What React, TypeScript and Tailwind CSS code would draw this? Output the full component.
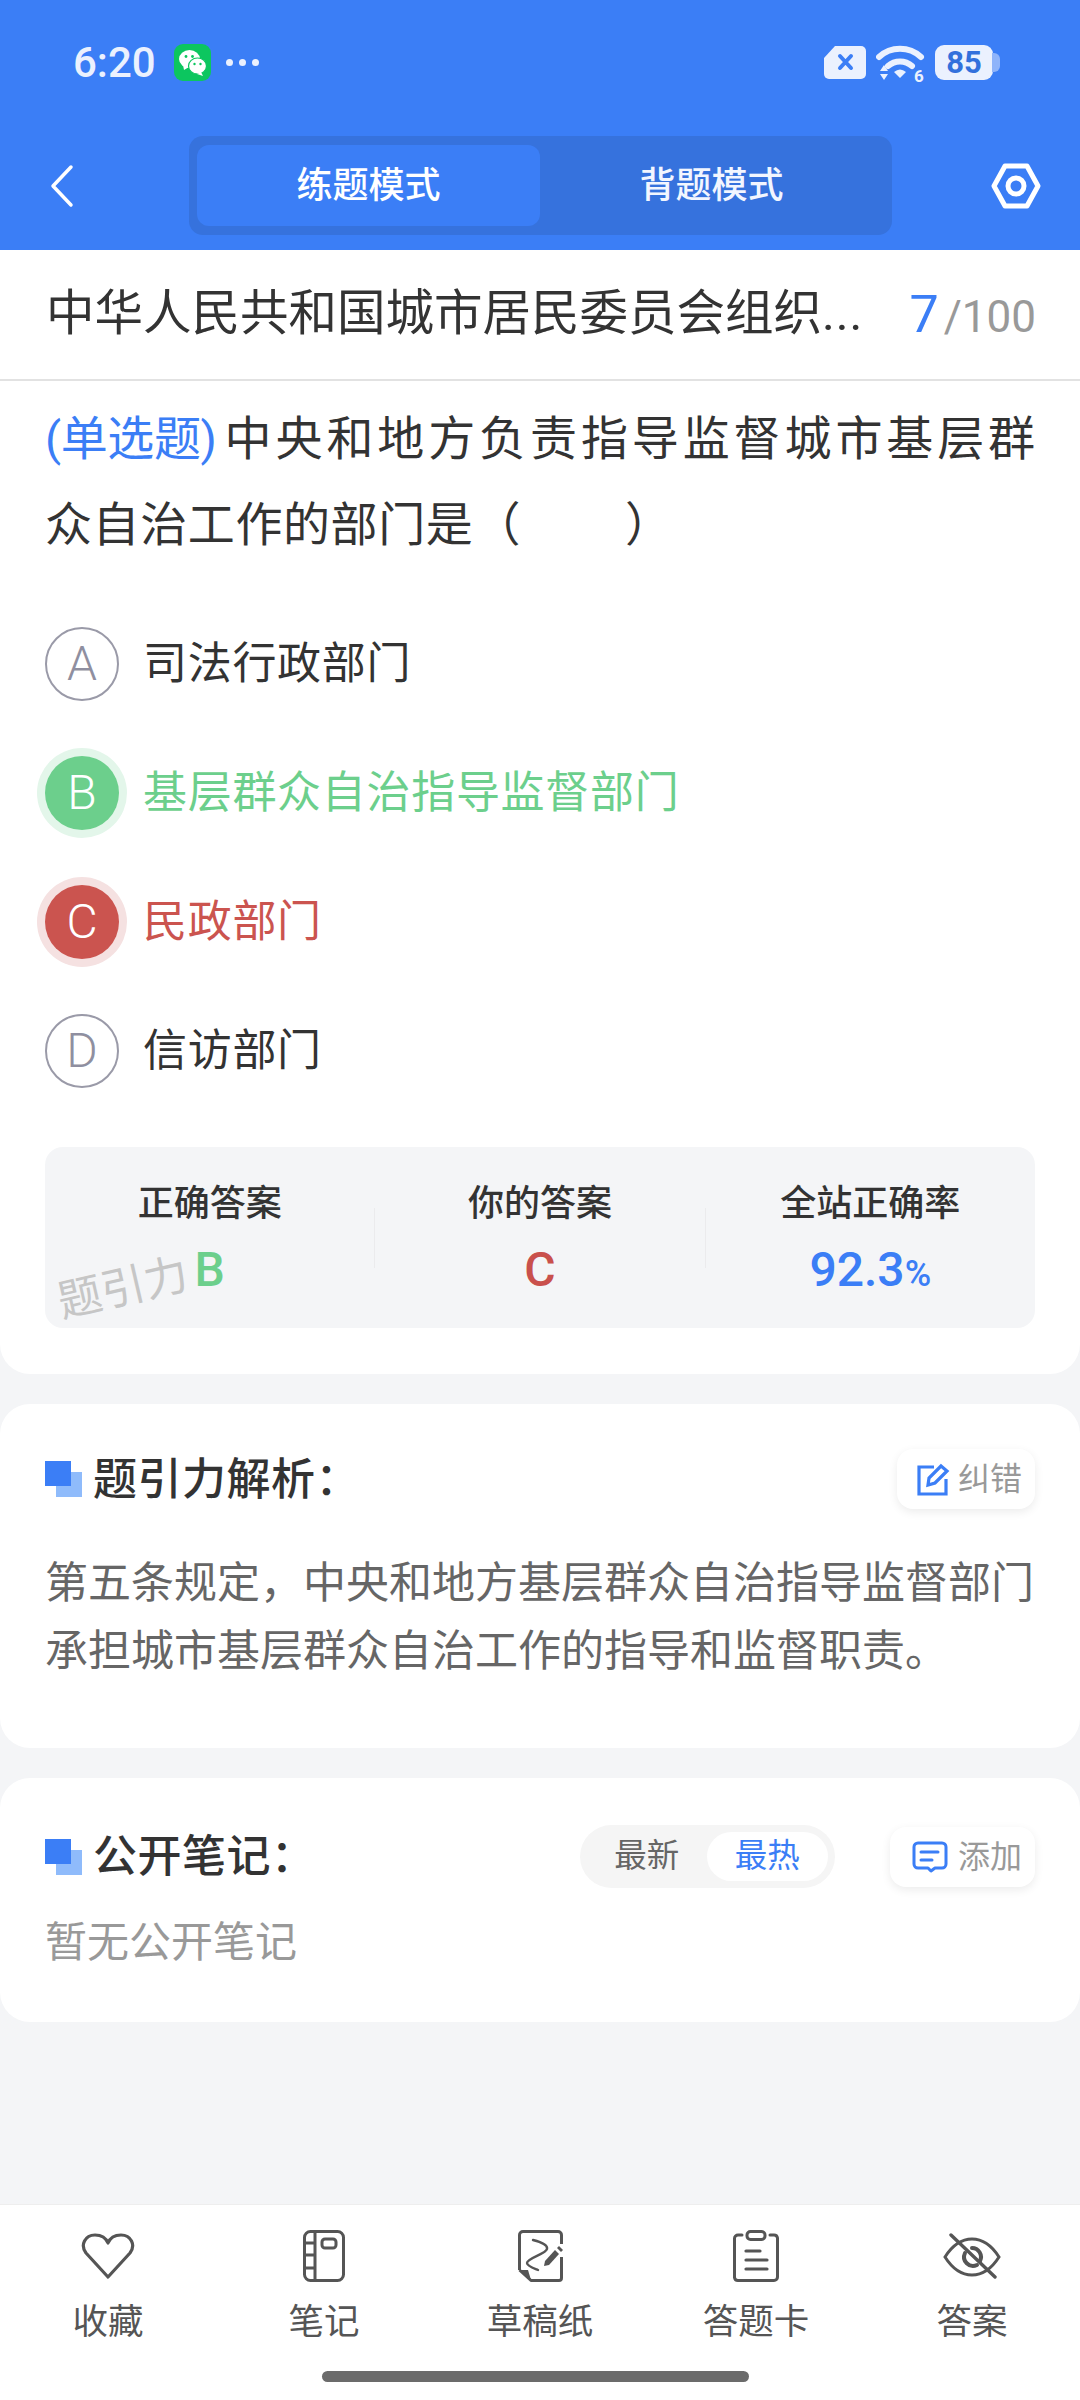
import React from "react";

const FONT = 'Roboto, "Noto Sans CJK SC", sans-serif';

function WeChat() {
  return (
    <div className="w-[37px] h-[37px] rounded-[9px] bg-[#0cc65f] flex items-center justify-center">
      <svg width="30" height="28" viewBox="0 0 30 28">
        <ellipse cx="11.5" cy="10" rx="10.5" ry="9" fill="#fff" />
        <path d="M5 16l1 5 5-3z" fill="#fff" />
        <ellipse cx="19.5" cy="17" rx="9" ry="8" fill="#fff" stroke="#0cc65f" strokeWidth="1.2" />
        <path d="M23 23l2 4-6-2z" fill="#fff" />
        <circle cx="8" cy="7.5" r="1.4" fill="#0cc65f" />
        <circle cx="14.5" cy="7.5" r="1.4" fill="#0cc65f" />
        <circle cx="16.5" cy="15" r="1.2" fill="#0cc65f" />
        <circle cx="22.5" cy="15" r="1.2" fill="#0cc65f" />
      </svg>
    </div>
  );
}

function StatusRight() {
  return (
    <div className="flex items-center">
      <svg width="44" height="35" viewBox="0 0 44 35" className="mr-[9px]">
        <path d="M12 1h26a5 5 0 0 1 5 5v23a5 5 0 0 1-5 5H6a5 5 0 0 1-5-5V13z" fill="#ebf1fe" />
        <path d="M17 11l11 12M28 11L17 23" stroke="#3b7ef6" strokeWidth="4" strokeLinecap="round" />
      </svg>
      <div className="relative w-[50px] h-[38px] mr-[9px]">
        <svg width="50" height="38" viewBox="0 0 50 38">
          <path d="M3 13a31 31 0 0 1 42 0" fill="none" stroke="#ebf1fe" strokeWidth="6" strokeLinecap="round" />
          <path d="M12 22a18 18 0 0 1 24 0" fill="none" stroke="#ebf1fe" strokeWidth="6" strokeLinecap="round" />
          <path d="M18 28q6-5 12 0l-6 6z" fill="#ebf1fe" />
          <path d="M4 27l4-6 4 6zM4 30l4 6 4-6z" fill="#ebf1fe" />
        </svg>
        <span className="absolute left-[38px] top-[24px] text-[17px] leading-[16px] font-bold text-[#ebf1fe]">6</span>
      </div>
      <div className="relative w-[65px] h-[35px]">
        <div className="w-[58px] h-[35px] rounded-[9px] bg-[#ebf1fe] flex items-center justify-center text-[31px] font-bold leading-none text-[#3270dc]">
          85
        </div>
        <div className="absolute left-[57px] top-[8px] w-[8px] h-[19px] rounded-r-[6px] bg-[#8fb4fa]" />
      </div>
    </div>
  );
}

function Squares() {
  return (
    <div className="relative w-[37px] h-[36px] shrink-0">
      <div className="absolute left-[11px] top-[11px] w-[26px] h-[25px] bg-[#8fbbfb]" />
      <div className="absolute left-0 top-0 w-[26px] h-[25px] bg-[#3b7ef6]" />
    </div>
  );
}

function Option({
  letter,
  text,
  state,
}: {
  letter: string;
  text: string;
  state?: "ok" | "bad";
}) {
  const circle =
    state === "ok"
      ? "bg-[#6ccf8c] text-white ring-[8px] ring-[#e3f6ea]"
      : state === "bad"
        ? "bg-[#cb544f] text-white ring-[8px] ring-[#f5e1e1]"
        : "border-2 border-[#9a9aa8] text-[#8f8fa0]";
  const label =
    state === "ok" ? "text-[#6ccf8c]" : state === "bad" ? "text-[#cb544f]" : "text-[#333333]";
  return (
    <div className="flex items-center h-[129px]">
      <div className={`w-[74px] h-[74px] rounded-full flex items-center justify-center text-[48px] font-light leading-none shrink-0 ${circle}`}>
        {letter}
      </div>
      <div className={`ml-[24px] text-[44px] leading-none tracking-[0.7px] ${label}`}>{text}</div>
    </div>
  );
}

function Stat({ label, children }: { label: string; children: React.ReactNode }) {
  return (
    <div className="flex-1 flex flex-col items-center">
      <div className="text-[36px] leading-[46px] font-medium text-[#333333]">{label}</div>
      <div className="mt-[18px] h-[50px] flex items-baseline justify-center text-[48px] leading-[50px] font-medium">
        {children}
      </div>
    </div>
  );
}

function Heart() {
  return (
    <svg width="54" height="46" viewBox="0 0 54 46" fill="none" stroke="#555" strokeWidth="3.2" strokeLinejoin="round">
      <path d="M27 44 L5 20 C-1 12 4 2 14 2 C20 2 25 5 27 10 C29 5 34 2 40 2 C50 2 55 12 49 20 Z" />
    </svg>
  );
}
function Notebook() {
  return (
    <svg width="42" height="52" viewBox="0 0 42 52" fill="none" stroke="#555" strokeWidth="3">
      <rect x="1.5" y="1.5" width="39" height="49" rx="6" />
      <path d="M12 2v48M2 13h10M2 25h10M2 38h10" />
      <rect x="19" y="9" width="14" height="9" rx="3" />
    </svg>
  );
}
function Scratch() {
  return (
    <svg width="45" height="52" viewBox="0 0 45 52" fill="none" stroke="#555" strokeWidth="3">
      <path d="M1.500 40V5a3.500 3.500 0 0 1 3.500-3.500h35a3.500 3.500 0 0 1 3.500 3.500v9M43.500 27v21a2.500 2.500 0 0 1-2.500 2.500H13L1.500 40" strokeLinejoin="round" />
      <path d="M2 40h8l3 10z" fill="#555" stroke="none" />
      <path d="M15 10c8 2 15 5 14 9-1 5-20 9-20 14 0 3 6 5 11 7" strokeWidth="2.400" strokeLinecap="round" />
      <path d="M26 36l1-5 10-11 4 4-10 11z" fill="#555" stroke="none" />
      <path d="M39 18l2-2 4 4-2 2z" fill="#555" stroke="none" />
    </svg>
  );
}
function Clipboard() {
  return (
    <svg width="46" height="52" viewBox="0 0 46 52" fill="none" stroke="#555" strokeWidth="3" strokeLinecap="round">
      <path d="M9 5H5a3.500 3.500 0 0 0-3.500 3.500v39A3.500 3.500 0 0 0 5 50.500h36a3.500 3.500 0 0 0 3.500-3.500v-39A3.500 3.500 0 0 0 41 5h-4" />
      <rect x="14" y="1.500" width="18" height="8" rx="3.500" />
      <path d="M13 21h14M13 30h21M13 39h21" strokeWidth="3.200" />
    </svg>
  );
}
function Eye() {
  return (
    <svg width="58" height="46" viewBox="0 0 58 46" fill="none" stroke="#555" strokeWidth="3" strokeLinecap="round">
      <path d="M2 24C9 13 18 6 29 6s20 7 27 18c-7 11-16 18-27 18S9 35 2 24z" />
      <path d="M29 15a9 9 0 0 1 8 13M22 20a9 9 0 0 0 12 12" strokeWidth="4" />
      <path d="M8 2l44 42" strokeWidth="3.400" />
    </svg>
  );
}

function TabItem({ icon, label }: { icon: React.ReactNode; label: string }) {
  return (
    <div className="flex-1 flex flex-col items-center">
      <div className="h-[54px] flex items-center justify-center">{icon}</div>
      <div className="mt-[17px] text-[35.500px] leading-[44px] text-[#555555]">{label}</div>
    </div>
  );
}

function Chip({ icon, label, width, gap }: { icon: React.ReactNode; label: string; width: string; gap: string }) {
  return (
    <div className={`${width} ${gap} h-[60px] rounded-[16px] bg-white shadow-[0_3px_10px_rgba(0,0,0,0.08)] flex items-center justify-end pr-[13px] text-[32px] leading-none text-[#999999]`}>
      {icon}
      <span>{label}</span>
    </div>
  );
}

export default function App() {
  return (
    <div className="w-[1080px] h-[2400px] flex flex-col bg-[#f4f5f7] overflow-hidden" style={{ fontFamily: FONT }}>
      {/* Header */}
      <div className="h-[250px] bg-[#3b7ef6] flex flex-col shrink-0">
        <div className="h-[136px] pl-[73px] pr-[80px] pb-[11px] flex items-center justify-between">
          <div className="flex items-center text-[#ebf1fe]">
            <span className="text-[42px] font-medium leading-none w-[101px]">6:20</span>
            <WeChat />
            <div className="ml-[15px] flex gap-[6px]">
              <span className="w-[7px] h-[7px] rounded-full bg-[#ebf1fe]" />
              <span className="w-[7px] h-[7px] rounded-full bg-[#ebf1fe]" />
              <span className="w-[7px] h-[7px] rounded-full bg-[#ebf1fe]" />
            </div>
          </div>
          <StatusRight />
        </div>
        <div className="h-[99px] flex items-center">
          <div className="w-[189px] pl-[50px]">
            <svg width="24" height="44" viewBox="0 0 24 44" fill="none" stroke="#fff" strokeWidth="3.500" strokeLinecap="round" strokeLinejoin="round">
              <path d="M21 3L3 22l18 19" />
            </svg>
          </div>
          <div className="w-[703px] h-[99px] rounded-[14px] bg-[#3672dd] p-[9px] pl-[8px] flex">
            <div className="w-[343px] h-[81px] rounded-[12px] bg-[#3b7ef6] flex items-center justify-center text-[36px] font-medium text-white">
              练题模式
            </div>
            <div className="flex-1 flex items-center justify-center text-[36px] font-medium text-[#f2f6ff]">
              背题模式
            </div>
          </div>
          <div className="flex-1 flex justify-end pr-[39px]">
            <svg width="50" height="46" viewBox="0 0 50 46" fill="none" stroke="#fff" strokeWidth="5" strokeLinejoin="round">
              <path d="M14 3h22l11 20-11 20H14L3 23z" />
              <circle cx="25" cy="23" r="8" />
            </svg>
          </div>
        </div>
      </div>

      {/* Main card */}
      <div className="bg-white rounded-b-[30px] h-[1124px] shrink-0">
        <div className="h-[131px] border-b-2 border-[#e2e2e2] pl-[46px] pr-[44px] flex items-center justify-between">
          <div className="text-[48.500px] leading-none text-[#333333] whitespace-nowrap">
            中华人民共和国城市居民委员会组织<span className="tracking-[1px]">...</span>
          </div>
          <div className="flex items-baseline">
            <span className="text-[52px] leading-none text-[#3b7ef6]">7</span>
            <span className="ml-[5px] text-[44px] leading-none text-[#999999]">/100</span>
          </div>
        </div>
        <div className="px-[45px] pt-[15px]">
          <div className="text-[47px] leading-[86px] text-[#333333]">
            <div className="flex justify-between whitespace-nowrap">
              <span className="text-[#3b7ef6] tracking-[-0.4px]">(单选题)</span>
              <span className="tracking-[3.900px] mr-[-4px]">中央和地方负责指导监督城市基层群</span>
            </div>
            <div className="tracking-[0.6px]">
              众自治工作的部门是<span className="tracking-[3.500px]">（　　）</span>
            </div>
          </div>
          <div className="mt-[31px]">
            <Option letter="A" text="司法行政部门" />
            <Option letter="B" text="基层群众自治指导监督部门" state="ok" />
            <Option letter="C" text="民政部门" state="bad" />
            <Option letter="D" text="信访部门" />
          </div>
          <div className="relative mt-[32px] h-[181px] rounded-[18px] bg-[#f4f5f7] pt-[34px] flex">
            <Stat label="正确答案">
              <span className="text-[#6ccf8c]">B</span>
            </Stat>
            <div className="w-[1px] h-[60px] mt-[27px] bg-[#ebebed]" />
            <Stat label="你的答案">
              <span className="text-[#c9504c]">C</span>
            </Stat>
            <div className="w-[1px] h-[60px] mt-[27px] bg-[#ebebed]" />
            <Stat label="全站正确率">
              <span className="text-[#3b7ef6]">92.3</span>
              <span className="text-[#3b7ef6] text-[36px]">%</span>
            </Stat>
            <div className="absolute left-[12px] top-[119px] text-[44px] leading-none text-[#c6c6c6] -rotate-[13deg] whitespace-nowrap">
              题引力
            </div>
          </div>
        </div>
      </div>

      {/* Analysis */}
      <div className="mt-[30px] bg-white rounded-[30px] h-[344px] shrink-0 px-[45px] pt-[45px]">
        <div className="flex items-center justify-between h-[60px]">
          <div className="flex items-center">
            <Squares />
            <span className="ml-[11px] text-[44px] leading-none font-medium tracking-[0.5px] text-[#333333] translate-y-[1px]">题引力解析：</span>
          </div>
          <Chip
            width="w-[138px]"
            gap="gap-[8px]"
            label="纠错"
            icon={
              <svg width="33" height="33" viewBox="0 0 33 33" fill="none" stroke="#3b7ef6" strokeWidth="3.200">
                <path d="M17 4H2v27h27V16" />
                <path d="M11 22l1-7L24 3l6 5-12 12z" />
              </svg>
            }
          />
        </div>
        <div className="mt-[40px] text-[43px] leading-[68px] text-[#666666]">
          第五条规定，中央和地方基层群众自治指导监督部门承担城市基层群众自治工作的指导和监督职责。
        </div>
      </div>

      {/* Notes */}
      <div className="mt-[30px] bg-white rounded-[30px] h-[244px] shrink-0 px-[45px] pt-[47px]">
        <div className="flex items-center h-[63px]">
          <Squares />
          <span className="ml-[11px] text-[44px] leading-none font-medium tracking-[0.5px] text-[#333333]">公开笔记：</span>
          <div className="ml-auto w-[255px] h-[63px] rounded-full bg-[#f5f5f5] p-[7px] flex items-center">
            <div className="w-[120px] text-center text-[32.500px] leading-none text-[#666666]">最新</div>
            <div className="w-[122px] h-[49px] rounded-full bg-white flex items-center justify-center text-[32.500px] leading-none text-[#3b7ef6]">
              最热
            </div>
          </div>
          <div className="ml-[55px]">
            <Chip
              width="w-[145px]"
              gap="gap-[10px]"
              label="添加"
              icon={
                <svg width="36" height="32" viewBox="0 0 36 32" fill="none" stroke="#3b7ef6" strokeWidth="3" strokeLinecap="round" strokeLinejoin="round">
                  <path d="M6 2h24a4 4 0 0 1 4 4v17a4 4 0 0 1-4 4h-7l-4 3-3-3H6a4 4 0 0 1-4-4V6a4 4 0 0 1 4-4z" />
                  <path d="M9 11h17M9 19h11" />
                </svg>
              }
            />
          </div>
        </div>
        <div className="mt-[28px] text-[42px] leading-[54px] text-[#999999]">暂无公开笔记</div>
      </div>

      {/* Bottom bar */}
      <div className="mt-auto h-[196px] shrink-0 bg-white border-t border-[#eeeeee] pt-[24px] flex flex-col">
        <div className="flex">
          <TabItem icon={<Heart />} label="收藏" />
          <TabItem icon={<Notebook />} label="笔记" />
          <TabItem icon={<Scratch />} label="草稿纸" />
          <TabItem icon={<Clipboard />} label="答题卡" />
          <TabItem icon={<Eye />} label="答案" />
        </div>
        <div className="mt-[27px] ml-[322px] w-[427px] h-[11px] rounded-full bg-[#6b6b6b]" />
      </div>
    </div>
  );
}
